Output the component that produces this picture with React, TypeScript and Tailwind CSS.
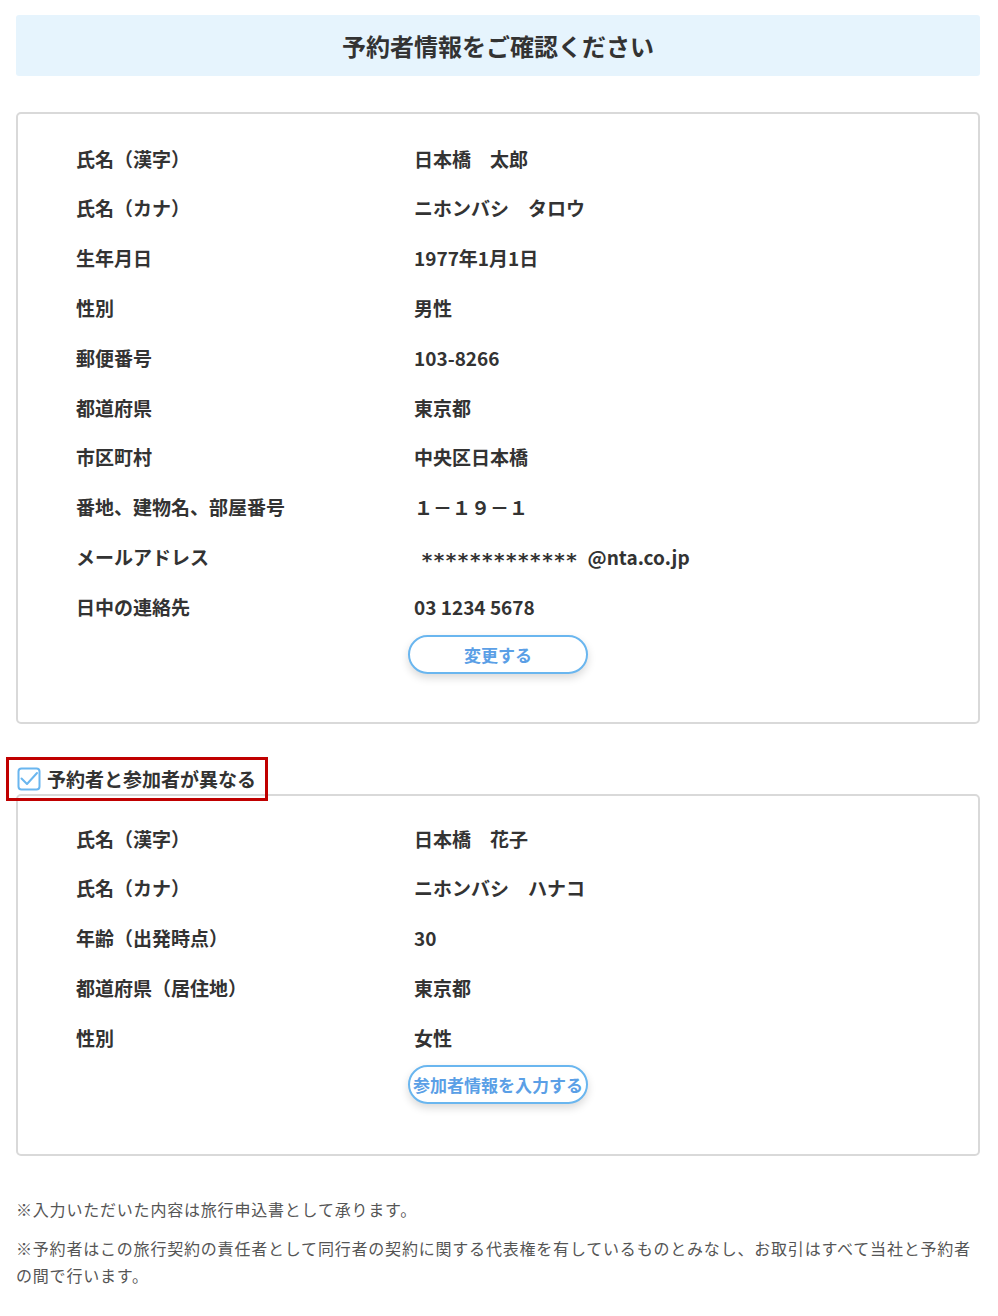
import React from "react";

const font = { fontFamily: '"Noto Sans CJK JP", "Noto Sans", sans-serif' };

function Row({ label, value }: { label: string; value: React.ReactNode }) {
  return (
    <div className="flex h-[49.8px] items-center text-[19px] font-bold text-[#333]">
      <div className="w-[338px] shrink-0">{label}</div>
      <div>{value}</div>
    </div>
  );
}

function PillButton({ children }: { children: React.ReactNode }) {
  return (
    <div className="flex">
      <div className="ml-[332px] flex h-[39px] w-[180px] items-center justify-center rounded-full border-2 border-[#6ab6ef] bg-white text-[17px] font-bold text-[#5b9fe6] shadow-[0_4px_8px_rgba(0,0,0,0.15)] whitespace-nowrap">
        {children}
      </div>
    </div>
  );
}

export default function App() {
  return (
    <div className="min-h-[1316px] w-[998px] bg-white pt-[15px]" style={font}>
      <div className="mx-[16px] w-[964px]">
        <div className="flex h-[61px] items-center justify-center rounded-[3px] bg-[#e6f4fd] text-[24px] font-bold text-[#333]">
          予約者情報をご確認ください
        </div>

        <div className="mt-[36px] rounded-[5px] border-2 border-[#d9d9d9] pl-[58px] pt-[20px] pb-[48px]">
          <Row label="氏名（漢字）" value="日本橋　太郎" />
          <Row label="氏名（カナ）" value="ニホンバシ　タロウ" />
          <Row label="生年月日" value="1977年1月1日" />
          <Row label="性別" value="男性" />
          <Row label="郵便番号" value="103-8266" />
          <Row label="都道府県" value="東京都" />
          <Row label="市区町村" value="中央区日本橋" />
          <Row label="番地、建物名、部屋番号" value="１－１９－１" />
          <Row
            label="メールアドレス"
            value={
              <span className="ml-[7px] flex items-center">
                <span className="mt-[6px] text-[20px]" style={{ fontFamily: '"DejaVu Sans Mono", monospace' }}>
                  *************
                </span>
                <span className="ml-[10px] text-[19px] font-semibold">@nta.co.jp</span>
              </span>
            }
          />
          <Row label="日中の連絡先" value="03 1234 5678" />
          <div className="mt-[3px]">
            <PillButton>変更する</PillButton>
          </div>
        </div>

        <div className="relative z-10 mt-[33px] -ml-[10px] -mb-[7px] flex h-[44px] w-[262px] items-center border-[3px] border-[#c00000] pl-[8px]">
          <svg width="24" height="24" viewBox="0 0 24 24" className="shrink-0">
            <rect x="1.5" y="1.5" width="21" height="21" rx="3" fill="white" stroke="#6ab6ef" strokeWidth="2" />
            <path d="M4.5 11.5 L10 17 L20 6" fill="none" stroke="#6ab6ef" strokeWidth="2" strokeLinecap="round" strokeLinejoin="round" />
          </svg>
          <span className="ml-[6px] text-[19px] font-bold text-[#333] whitespace-nowrap">予約者と参加者が異なる</span>
        </div>

        <div className="rounded-[5px] border-2 border-[#d9d9d9] pl-[58px] pt-[18px] pb-[50px]">
          <Row label="氏名（漢字）" value="日本橋　花子" />
          <Row label="氏名（カナ）" value="ニホンバシ　ハナコ" />
          <Row label="年齢（出発時点）" value="30" />
          <Row label="都道府県（居住地）" value="東京都" />
          <Row label="性別" value="女性" />
          <div className="mt-[2px]">
            <PillButton>参加者情報を入力する</PillButton>
          </div>
        </div>

        <div className="mt-[40px] w-[960px] text-[16px] leading-[27px] tracking-[0.8px] text-[#555]">
          <p>※入力いただいた内容は旅行申込書として承ります。</p>
          <p className="mt-[12px]">
            ※予約者はこの旅行契約の責任者として同行者の契約に関する代表権を有しているものとみなし、お取引はすべて当社と予約者の間で行います。
          </p>
        </div>
      </div>
    </div>
  );
}
